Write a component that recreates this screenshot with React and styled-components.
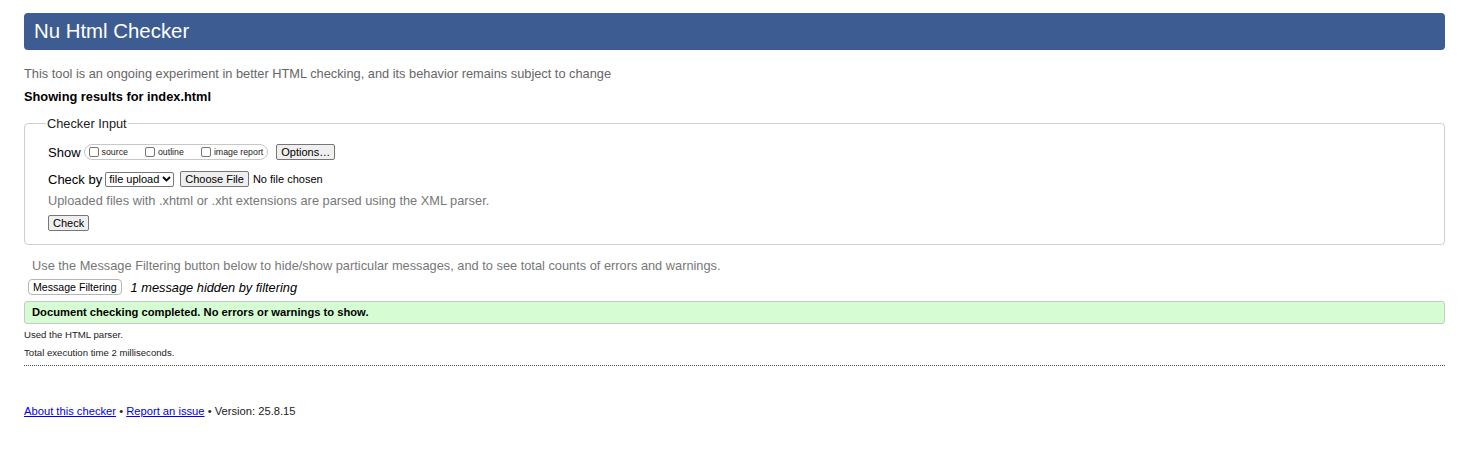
import React from "react";
import styled, { createGlobalStyle } from "styled-components";

const GlobalStyle = createGlobalStyle`
  body {
    margin: 0;
    background: #fff;
    font-family: "Liberation Sans", Arial, sans-serif;
    color: #000;
  }
`;

const Page = styled.div`
  width: 1421px;
  padding: 13px 0 0 24px;
`;

const Header = styled.h1`
  margin: 0;
  height: 37px;
  padding-left: 10px;
  background: #3d5c91;
  color: #fff;
  border-radius: 4px;
  font-size: 20.4px;
  font-weight: normal;
  line-height: 37px;
`;

const Intro = styled.p`
  margin: 16px 0 0;
  font-size: 12.8px;
  line-height: 15px;
  color: #666;
`;

const Results = styled.p`
  margin: 8px 0 0;
  font-size: 12.8px;
  line-height: 15px;
  font-weight: bold;
`;

const Fieldset = styled.fieldset`
  margin: 12px 0 0;
  padding: 6px 22px 13px 23px;
  border: 1px solid #cfcfcf;
  border-radius: 4px;
`;

const Legend = styled.legend`
  margin-left: -2px;
  padding: 0 1px;
  font-size: 12.8px;
  line-height: 15px;
  color: #222;
`;

const Row = styled.div`
  display: flex;
  align-items: center;
  height: 16px;
  margin-top: ${(p) => p.$gap}px;
`;

const Label = styled.span`
  font-size: 13px;
  margin-right: ${(p) => p.$space}px;
`;

const Pill = styled.div`
  display: flex;
  align-items: center;
  height: 14px;
  padding: 0 4px;
  border: 1px solid #c8c8c8;
  border-radius: 8px;
`;

const Option = styled.label`
  display: flex;
  align-items: center;
  font-size: 8.8px;
  color: #222;
  margin-right: ${(p) => p.$space}px;
`;

const Box = styled.span`
  width: 10px;
  height: 10px;
  margin-right: 3px;
  border: 1px solid #767676;
  border-radius: 2px;
  background: #fff;
  box-sizing: border-box;
`;

const Button = styled.button`
  height: 16px;
  padding: 0 4px;
  margin: 0 0 0 ${(p) => p.$left || 0}px;
  font-family: "Liberation Sans", Arial, sans-serif;
  font-size: 11px;
  line-height: 14px;
  color: #000;
  background: #efefef;
  border: 1px solid #767676;
  border-radius: 2px;
`;

const Select = styled.div`
  display: flex;
  align-items: center;
  height: 15px;
  width: 69px;
  box-sizing: border-box;
  margin-left: 3px;
  padding: 0 2px 0 3px;
  font-size: 11px;
  border: 1px solid #767676;
  border-radius: 2px;
  justify-content: space-between;
`;

const FileNote = styled.span`
  font-size: 11px;
  margin-left: 4px;
`;

const Hint = styled.p`
  margin: ${(p) => p.$top}px 0 0 ${(p) => p.$left || 0}px;
  font-size: 12.8px;
  line-height: 15px;
  color: #777;
`;

const FilterRow = styled.div`
  display: flex;
  align-items: center;
  height: 16px;
  margin: 6px 0 0 4px;
`;

const FilterButton = styled.button`
  height: 16px;
  padding: 0 4px;
  font-family: "Liberation Sans", Arial, sans-serif;
  font-size: 10.6px;
  color: #000;
  background: #fff;
  border: 1px solid #b5b5b5;
  border-radius: 4px;
`;

const Hidden = styled.em`
  margin-left: 9px;
  font-size: 12.8px;
`;

const Success = styled.div`
  margin-top: 6px;
  height: 21px;
  padding-left: 7px;
  background: #d6fcd3;
  border: 1px solid #c9c9c9;
  border-radius: 3px;
  font-size: 11.2px;
  font-weight: bold;
  line-height: 21px;
`;

const Small = styled.p`
  margin: ${(p) => p.$top}px 0 0;
  font-size: 9.6px;
  line-height: 11px;
  color: #222;
`;

const Rule = styled.hr`
  margin: 7px 0 0;
  border: 0;
  border-top: 1px dotted #555;
`;

const Footer = styled.p`
  margin: 38px 0 0;
  font-size: 11.2px;
  line-height: 14px;
  color: #222;

  a {
    color: #0000ee;
  }
`;

const Chevron = () => (
  <svg width="9" height="6" viewBox="0 0 9 6">
    <path d="M1 1l3.5 3.5L8 1" fill="none" stroke="#000" strokeWidth="1.8" />
  </svg>
);

export default function App() {
  return (
    <>
      <GlobalStyle />
      <Page>
        <Header>Nu Html Checker</Header>
        <Intro>
          This tool is an ongoing experiment in better HTML checking, and its
          behavior remains subject to change
        </Intro>
        <Results>Showing results for index.html</Results>
        <Fieldset>
          <Legend>Checker Input</Legend>
          <Row $gap={7}>
            <Label $space={3}>Show</Label>
            <Pill>
              <Option $space={17}>
                <Box />
                source
              </Option>
              <Option $space={17}>
                <Box />
                outline
              </Option>
              <Option $space={0}>
                <Box />
                image report
              </Option>
            </Pill>
            <Button $left={8}>Options…</Button>
          </Row>
          <Row $gap={11}>
            <Label $space={0}>Check by</Label>
            <Select>
              file upload <Chevron />
            </Select>
            <Button $left={6}>Choose File</Button>
            <FileNote>No file chosen</FileNote>
          </Row>
          <Hint $top={6}>
            Uploaded files with .xhtml or .xht extensions are parsed using the
            XML parser.
          </Hint>
          <Row $gap={7}>
            <Button>Check</Button>
          </Row>
        </Fieldset>
        <Hint $top={13} $left={8}>
          Use the Message Filtering button below to hide/show particular
          messages, and to see total counts of errors and warnings.
        </Hint>
        <FilterRow>
          <FilterButton>Message Filtering</FilterButton>
          <Hidden>1 message hidden by filtering</Hidden>
        </FilterRow>
        <Success>
          Document checking completed. No errors or warnings to show.
        </Success>
        <Small $top={5}>Used the HTML parser.</Small>
        <Small $top={7}>Total execution time 2 milliseconds.</Small>
        <Rule />
        <Footer>
          <a href="#about">About this checker</a> •{" "}
          <a href="#issue">Report an issue</a> • Version: 25.8.15
        </Footer>
      </Page>
    </>
  );
}
